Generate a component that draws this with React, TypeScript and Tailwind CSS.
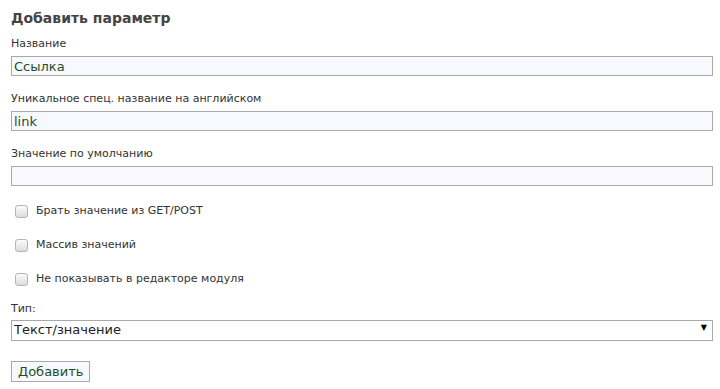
import { useState } from "react";

const font = { fontFamily: '"DejaVu Sans", Verdana, sans-serif' };

function Field({ label, value }: { label: string; value: string }) {
  const [v, setV] = useState(value);
  return (
    <div className="flex flex-col">
      <label className="text-[11px] leading-[14px] text-[#333]">{label}</label>
      <input
        type="text"
        value={v}
        onChange={(e) => setV(e.target.value)}
        className="mt-[5px] h-[20px] w-full border border-[#a9a9a9] bg-[#f8f8ff] px-[2px] text-[13px] leading-[18px] text-[#1f4f1f] outline-none"
      />
    </div>
  );
}

function Check({ label }: { label: string }) {
  const [on, setOn] = useState(false);
  return (
    <label className="flex items-center gap-[8px] pl-[4px] h-[14px] text-[11px] text-[#333] cursor-pointer">
      <input
        type="checkbox"
        checked={on}
        onChange={() => setOn(!on)}
        className="appearance-none w-[13px] h-[13px] rounded-[3px] border border-[#b5b5b5] bg-gradient-to-b from-[#fcfcfc] to-[#dcdcdc] checked:bg-[#5a8a5a]"
      />
      {label}
    </label>
  );
}

export default function App() {
  const [type, setType] = useState("text");
  return (
    <div className="min-h-screen bg-white px-[11px] pt-[8px]" style={font}>
      <h2 className="text-[14px] leading-[20px] font-bold text-[#444]">Добавить параметр</h2>

      <div className="mt-[9px] flex flex-col gap-[16px] w-[702px]">
        <Field label="Название" value="Ссылка" />
        <Field label="Уникальное спец. название на английском" value="link" />
        <Field label="Значение по умолчанию" value="" />
      </div>

      <div className="mt-[18px] flex flex-col gap-[20px]">
        <Check label="Брать значение из GET/POST" />
        <Check label="Массив значений" />
        <Check label="Не показывать в редакторе модуля" />
      </div>

      <div className="mt-[16px] flex flex-col w-[702px]">
        <label className="text-[11px] leading-[14px] text-[#333]">Тип:</label>
        <div className="relative mt-[1px]">
          <select
            value={type}
            onChange={(e) => setType(e.target.value)}
            className="appearance-none h-[21px] w-full border border-[#a9a9a9] bg-white px-[2px] text-[13px] leading-[18px] text-[#222] outline-none"
          >
            <option value="text">Текст/значение</option>
            <option value="list">Список</option>
            <option value="check">Флажок</option>
          </select>
          <span className="pointer-events-none absolute right-[6px] top-[6px] text-[8px] leading-[9px] text-black">▼</span>
        </div>
      </div>

      <button
        type="button"
        className="mt-[20px] h-[21px] border border-[#a9a9a9] bg-[#f8f8ff] px-[6px] text-[13px] leading-[18px] text-[#1f4f1f]"
      >
        Добавить
      </button>
    </div>
  );
}
